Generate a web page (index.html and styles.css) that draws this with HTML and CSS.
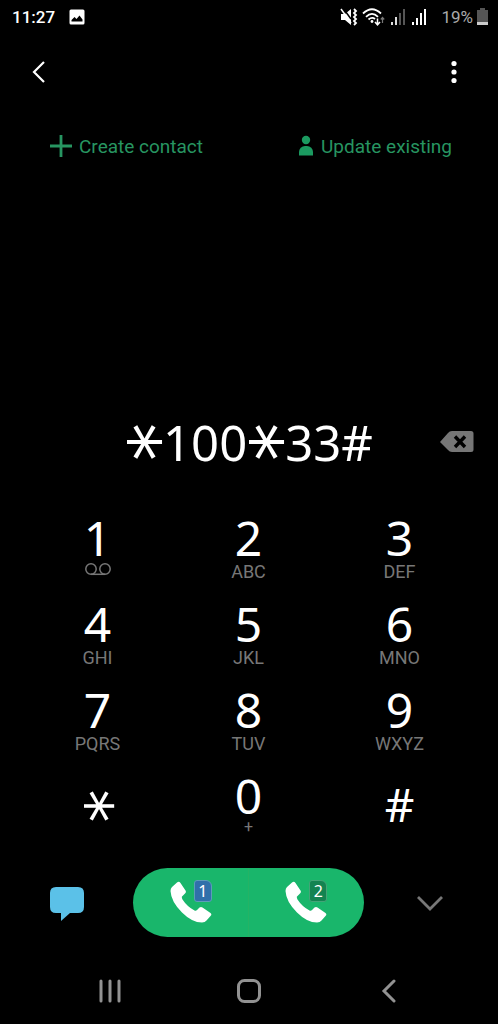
FILE: index.html
```html
<!DOCTYPE html>
<html lang="en">
<head>
<meta charset="utf-8">
<meta name="viewport" content="width=device-width, initial-scale=1">
<title>Phone</title>
<link rel="stylesheet" href="styles.css">
</head>
<body>
<div class="phone">
  <header class="status">
    <span class="clock">11:27</span>
    <svg class="picture" width="16" height="16" viewBox="0 0 16 16"><rect x="0.500" y="0.500" width="15" height="15" rx="1.500" fill="#fff"/><path d="M2.500 12.500V11l3-3 2 2 3-3.500 3 4v2z" fill="#000"/></svg>
    <div class="signals">
      <svg width="18" height="18" viewBox="0 0 18 18"><path d="M1 6h4l6-5v16l-6-5H1z" fill="#fff"/><path d="M3 0l8 11" stroke="#000" stroke-width="1.500"/><path d="M1 1l10 14" stroke="#fff" stroke-width="1.500"/><path d="M14 1l2 2-2 2 2 2-2 2 2 2-2 2 2 2-2 2" fill="none" stroke="#fff" stroke-width="1.800"/></svg>
      <svg width="24" height="18" viewBox="0 0 24 18"><g fill="none" stroke="#fff" stroke-width="1.800"><path d="M1 5.500Q10-3 19 5.500"/><path d="M4 8.800Q10 3 16 8.800"/><path d="M6.500 11.500Q10 8.500 13 11"/></g><circle cx="10" cy="13.500" r="1.400" fill="#fff"/><path d="M15.500 10.500v6M13 14l2.500 2.800L18 14" fill="none" stroke="#fff" stroke-width="1.500"/><path d="M20.500 15V9.500M18.800 11.500l1.700-2 1.700 2" fill="none" stroke="#777" stroke-width="1.200"/></svg>
      <svg width="17" height="18" viewBox="0 -1 17 18"><path d="M1 13h2v3H1zM5 8h2v8H5z" fill="#ddd"/><path d="M9 4h2v12H9zM13 0h2v16h-2z" fill="#555"/></svg>
      <svg width="17" height="18" viewBox="0 -1 17 18"><path d="M1 13h2v3H1zM5 9h2v7H5zM9 4h2v12H9zM13 0h2v16h-2z" fill="#fff"/></svg>
      <span class="percent">19%</span>
      <svg width="11" height="18" viewBox="0 0 11 18"><path d="M3 0h5v2h3v15H0V2h3z" fill="#555"/><path d="M0 14h11v3H0z" fill="#ccc"/></svg>
    </div>
  </header>

  <div class="toolbar">
    <button class="icon-button" aria-label="Back"><svg width="14" height="24" viewBox="0 0 14 24"><path d="M13 2L3 12l10 10" fill="none" stroke="#fff" stroke-width="2.200"/></svg></button>
    <button class="icon-button" aria-label="More options"><svg width="6" height="24" viewBox="0 0 6 24" fill="#fff"><circle cx="3" cy="3.500" r="2.600"/><circle cx="3" cy="12" r="2.600"/><circle cx="3" cy="20.500" r="2.600"/></svg></button>
  </div>

  <div class="actions">
    <button class="action"><svg width="22" height="22" viewBox="0 0 22 22"><path d="M11 0v22M0 11h22" stroke="#279561" stroke-width="2.800"/></svg>Create contact</button>
    <button class="action"><svg width="16" height="22" viewBox="0 0 16 22" fill="#1b9a60"><circle cx="8" cy="5" r="4.200"/><path d="M1 20.500v-3.500a6 6 0 0 1 6-6h2a6 6 0 0 1 6 6v3.500z"/></svg>Update existing</button>
  </div>

  <main class="dialer">
    <div class="entry">
      <output class="number"><span class="star">*</span>100<span class="star">*</span>33#</output>
      <button class="icon-button erase" aria-label="Delete"><svg width="34" height="22" viewBox="0 0 34 22"><path d="M0 11L8 2q1.500-2 4-2h19q2.500 0 2.500 2.500v16q0 2.500-2.500 2.500H12q-2.500 0-4-2z" fill="#767676"/><path d="M15 5.500l10 10.500M25 5.500L15 16" stroke="#000" stroke-width="3.400"/></svg></button>
    </div>

    <div class="keypad">
      <button class="key">1<span class="letters"><svg width="28" height="13" viewBox="0 0 28 13" fill="none" stroke="#777" stroke-width="1.500"><circle cx="7" cy="6" r="5.200"/><circle cx="21" cy="6" r="5.200"/><path d="M7 11.300h14"/></svg></span></button>
      <button class="key">2<span class="letters">ABC</span></button>
      <button class="key">3<span class="letters">DEF</span></button>
      <button class="key">4<span class="letters">GHI</span></button>
      <button class="key">5<span class="letters">JKL</span></button>
      <button class="key">6<span class="letters">MNO</span></button>
      <button class="key">7<span class="letters">PQRS</span></button>
      <button class="key">8<span class="letters">TUV</span></button>
      <button class="key">9<span class="letters">WXYZ</span></button>
      <button class="key symbol"><span class="star">*</span></button>
      <button class="key">0<span class="letters plus">+</span></button>
      <button class="key symbol">#</button>
    </div>

    <div class="callbar">
      <button class="icon-button" aria-label="Message"><svg width="36" height="40" viewBox="0 -4 36 40"><path d="M7 1h22q6 0 6 6v14q0 6-6 6h-8l-9 8v-8H7q-6 0-6-6V7q0-6 6-6z" fill="#5bc1e8"/></svg></button>
      <div class="call">
        <button class="sim" aria-label="Call with SIM 1"><svg width="42" height="43" viewBox="0 0 42 43"><path d="M2 6L7 1.500Q9 0 10.500 2L15.500 9.500Q16.500 11 15 12.500L12 15.500Q11.500 16.500 12.500 18.500Q17 25.500 24.500 29.500Q26 30.200 27 29L29.500 26.500Q31 25.500 32.500 26.500L40.500 32Q42.200 33.500 40.500 35L36.500 39.500Q35 41.500 32 41.500Q22 41.500 12 31.500Q1 20.500 .5 10Q.5 7.500 2 6z" fill="#fff"/></svg><span class="badge blue">1</span></button>
        <button class="sim" aria-label="Call with SIM 2"><svg width="42" height="43" viewBox="0 0 42 43"><path d="M2 6L7 1.500Q9 0 10.500 2L15.500 9.500Q16.500 11 15 12.500L12 15.500Q11.500 16.500 12.500 18.500Q17 25.500 24.500 29.500Q26 30.200 27 29L29.500 26.500Q31 25.500 32.500 26.500L40.500 32Q42.200 33.500 40.500 35L36.500 39.500Q35 41.500 32 41.500Q22 41.500 12 31.500Q1 20.500 .5 10Q.5 7.500 2 6z" fill="#fff"/></svg><span class="badge">2</span></button>
      </div>
      <button class="icon-button" aria-label="Hide keypad"><svg width="28" height="22" viewBox="0 -4 28 22"><path d="M2 2l12 12L26 2" fill="none" stroke="#777" stroke-width="2.800"/></svg></button>
    </div>
  </main>

  <nav class="nav">
    <button class="icon-button" aria-label="Recent apps"><svg width="24" height="24" viewBox="0 0 24 24"><path d="M3 2v20M12 2v20M21 2v20" stroke="#929292" stroke-width="3" stroke-linecap="round"/></svg></button>
    <button class="icon-button" aria-label="Home"><svg width="26" height="26" viewBox="0 0 26 26"><rect x="2.500" y="2.500" width="21" height="21" rx="6" fill="none" stroke="#929292" stroke-width="3"/></svg></button>
    <button class="icon-button" aria-label="Back"><svg width="16" height="24" viewBox="0 0 16 24"><path d="M13 2L3 12l10 10" fill="none" stroke="#929292" stroke-width="3" stroke-linecap="round"/></svg></button>
  </nav>
</div>
</body>
</html>
```
FILE: styles.css
```css
* { box-sizing: border-box; }
body { margin: 0; background: #000; color: #fff; font-family: Roboto, sans-serif; }
svg { display: block; flex: none; }
button { padding: 0; border: 0; background: none; color: inherit; font: inherit; cursor: pointer; }

.phone { min-height: 100vh; display: flex; flex-direction: column; }

.status { display: flex; align-items: center; height: 34px; padding: 0 10px 0 12px; }
.clock { font-size: 17px; font-weight: 500; }
.picture { margin-left: 14px; }
.signals { display: flex; align-items: center; gap: 4px; margin-left: auto; }
.percent { margin-left: 9px; font-size: 17px; color: #aaa; }

.icon-button { display: grid; place-items: center; min-width: 48px; height: 48px; }
.toolbar { display: flex; align-items: center; justify-content: space-between; height: 76px; padding: 0 20px 0 14px; }

.actions { display: flex; justify-content: space-between; padding: 12px 46px 0 50px; }
.action { display: flex; align-items: center; gap: 7px; height: 48px; font-size: 19px; color: #279561; }

.dialer { margin-top: auto; }
.entry { display: grid; grid-template-columns: 1fr auto 1fr; align-items: center; height: 60px; padding: 0 17px; margin-bottom: 41px; }
.number { grid-column: 2; display: flex; align-items: center; font: 49px/60px "Noto Sans", sans-serif; }
.erase { justify-self: end; }
.star { display: grid; place-items: center; width: 38px; height: 38px; padding-top: 26px; font: 76px/0 "DejaVu Sans", sans-serif; transform: rotate(90deg); }

.keypad { display: grid; grid-template-columns: repeat(3, 1fr); grid-auto-rows: 86px; padding: 0 23px 0 22px; }
.key { display: flex; flex-direction: column; align-items: center; font: 48px/50px "Noto Sans", sans-serif; }
.letters { font: 18px/18px Roboto, sans-serif; color: #777; }
.letters.plus { font-size: 16px; line-height: 12px; }
.symbol { font-size: 46px; line-height: 66px; }
.symbol .star { margin-top: 16px; font-size: 66px; line-height: 0; padding-top: 22px; }

.callbar { display: flex; align-items: center; justify-content: space-between; height: 90px; padding: 0 44px 0 43px; }
.call { display: flex; width: 56%; height: 69px; border-radius: 35px; background: #19b66b; overflow: hidden; }
.sim { position: relative; flex: 1; display: grid; place-items: center; }
.sim + .sim { border-left: 1px solid #25b365; }
.badge { position: absolute; top: 12px; left: calc(50% + 3px); width: 18px; height: 22px; border: 1px solid #43a477; border-radius: 3px 6px 3px 3px; background: #138351; font: 16px/20px "Noto Sans", sans-serif; }
.badge.blue { background: #3070aa; border-color: #5c9db8; }

.nav { display: grid; grid-template-columns: repeat(3, 1fr); height: 66px; margin-top: 11px; padding: 0 39px 0 40px; place-items: center; }
```
